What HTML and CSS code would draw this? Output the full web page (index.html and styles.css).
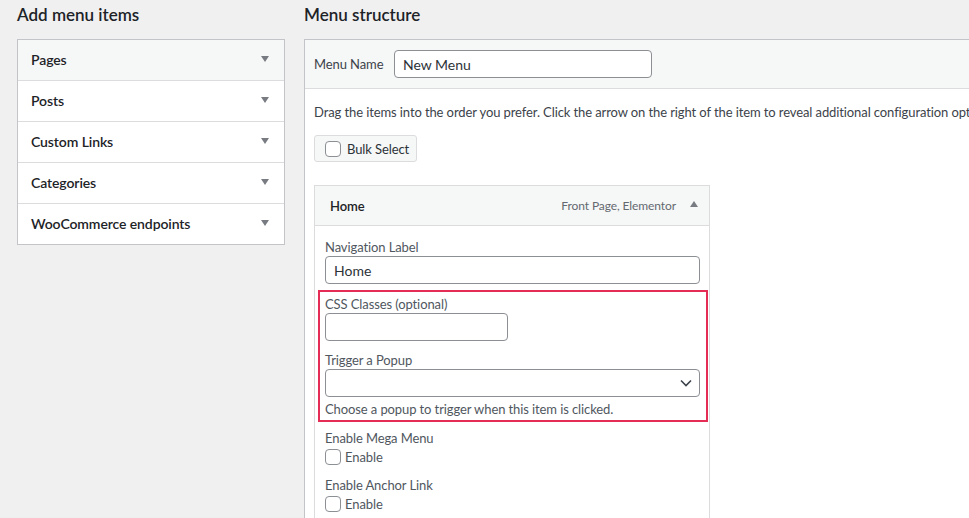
FILE: index.html
```html
<!DOCTYPE html>
<html lang="en">
<head>
  <meta charset="UTF-8" />
  <meta name="viewport" content="width=device-width, initial-scale=1.0" />
  <title>Menus</title>
  <link rel="stylesheet" href="styles.css">
</head>
<body>
  <div class="wrap">
    <!-- left column -->
    <div class="col-left">
      <h2>Add menu items</h2>
      <div class="accordion">
        <div class="acc-row first">Pages <span class="tri down"></span></div>
        <div class="acc-row">Posts <span class="tri down"></span></div>
        <div class="acc-row">Custom Links <span class="tri down"></span></div>
        <div class="acc-row">Categories <span class="tri down"></span></div>
        <div class="acc-row">WooCommerce endpoints <span class="tri down"></span></div>
      </div>
    </div>

    <!-- right column -->
    <div class="col-right">
      <h2>Menu structure</h2>
      <div class="menu-box">
        <div class="menu-head">
          <label class="name-label">Menu Name</label>
          <input class="text-input name-input" type="text" value="New Menu">
        </div>
        <div class="menu-body">
          <p class="intro">Drag the items into the order you prefer. Click the arrow on the right of the item to reveal additional configuration options.</p>
          <div class="bulk-btn"><span class="check"></span> Bulk Select</div>

          <div class="item">
            <div class="item-bar">
              <span class="item-title">Home</span>
              <span class="item-meta">Front Page, Elementor <span class="tri up"></span></span>
            </div>
            <div class="item-settings">
              <div class="field">
                <div class="field-label">Navigation Label</div>
                <input class="text-input wide" type="text" value="Home">
              </div>
              <div class="highlight">
                <div class="field">
                  <div class="field-label">CSS Classes (optional)</div>
                  <input class="text-input short" type="text" value="">
                </div>
                <div class="field gap">
                  <div class="field-label">Trigger a Popup</div>
                  <div class="select">
                    <svg width="12" height="8" viewBox="0 0 12 8"><path d="M1 1.5l5 5 5-5" fill="none" stroke="#3c434a" stroke-width="1.6"/></svg>
                  </div>
                  <div class="help">Choose a popup to trigger when this item is clicked.</div>
                </div>
              </div>
              <div class="field">
                <div class="field-label">Enable Mega Menu</div>
                <div class="check-line"><span class="check"></span> Enable</div>
              </div>
              <div class="field gap-lg">
                <div class="field-label">Enable Anchor Link</div>
                <div class="check-line"><span class="check"></span> Enable</div>
              </div>
            </div>
          </div>
        </div>
      </div>
    </div>
  </div>
</body>
</html>
```

FILE: styles.css
```css
html, body {
  margin: 0;
  height: 100%;
  overflow: hidden;
}
body {
  background-color: #f0f0f1;
  color: #1d2327;
  font-family: Lato, "Liberation Sans", sans-serif;
  font-size: 13px;
  letter-spacing: -0.1px;
}
.wrap {
  display: flex;
  gap: 19px;
  padding-left: 17px;
}
h2 {
  font-size: 17px;
  font-weight: 600;
  margin: 0;
  padding-top: 4px;
  line-height: 22px;
  height: 35px;
  letter-spacing: 0;
}
.col-left {
  width: 268px;
  flex: none;
}
.accordion {
  border: 1px solid #c3c4c7;
  background-color: #fff;
}
.acc-row {
  display: flex;
  justify-content: space-between;
  align-items: center;
  box-sizing: border-box;
  height: 41px;
  padding: 0 14px 2px 13px;
  font-size: 14px;
  font-weight: 600;
  border-top: 1px solid #dcdcde;
}
.acc-row.first {
  border-top: none;
  height: 40px;
  background-color: #f6f7f7;
}
.tri {
  display: inline-block;
  width: 0;
  height: 0;
  border-left: 4px solid transparent;
  border-right: 4px solid transparent;
}
.tri.down {
  border-top: 6px solid #787c82;
  margin-right: 1px;
}
.tri.up {
  border-bottom: 6px solid #787c82;
  margin-left: 14px;
  margin-bottom: 3px;
}
.col-right {
  width: 720px;
  flex: none;
}
.menu-box {
  border: 1px solid #c3c4c7;
  background-color: #fff;
  height: 600px;
}
.menu-head {
  display: flex;
  align-items: center;
  height: 48px;
  padding: 0 9px;
  background-color: #f6f7f7;
  border-bottom: 1px solid #dcdcde;
}
.name-label {
  width: 80px;
  color: #3c434a;
}
.text-input {
  box-sizing: border-box;
  height: 28px;
  border: 1px solid #8c8f94;
  border-radius: 4px;
  padding: 0 8px;
  font-family: inherit;
  font-size: 14px;
  color: #2c3338;
  background-color: #fff;
}
.name-input {
  width: 258px;
}
.menu-body {
  padding: 13px 9px 0;
}
.intro {
  margin: 0;
  line-height: 20px;
  color: #3c434a;
  white-space: nowrap;
}
.bulk-btn {
  display: inline-flex;
  align-items: center;
  gap: 6px;
  margin-top: 13px;
  height: 25px;
  padding: 0 7px 0 10px;
  border: 1px solid #dcdcde;
  border-radius: 3px;
  background-color: #f6f7f7;
  color: #2c3338;
}
.check {
  display: inline-block;
  box-sizing: border-box;
  width: 16px;
  height: 16px;
  border: 1px solid #8c8f94;
  border-radius: 4px;
  background-color: #fff;
}
.item {
  width: 396px;
  margin-top: 23px;
}
.item-bar {
  display: flex;
  justify-content: space-between;
  align-items: center;
  height: 39px;
  padding: 0 11px 0 15px;
  background-color: #f6f7f7;
  border: 1px solid #dcdcde;
}
.item-title {
  font-weight: 600;
}
.item-meta {
  color: #646970;
  font-size: 12px;
  display: flex;
  align-items: center;
}
.item-settings {
  border: 1px solid #dcdcde;
  border-top: none;
  padding: 12px 9px 40px 10px;
}
.field-label {
  line-height: 18px;
  color: #50575e;
}
.field.gap {
  margin-top: 10px;
}
.field.gap-lg {
  margin-top: 11px;
}
.wide {
  width: 100%;
}
.short {
  width: 183px;
}
.highlight {
  margin: 6px -8px 7px -7px;
  padding: 3px 6px 2px 5px;
  border: 2px solid #e42c55;
}
.select {
  box-sizing: border-box;
  height: 28px;
  border: 1px solid #8c8f94;
  border-radius: 4px;
  display: flex;
  align-items: center;
  justify-content: flex-end;
  padding-right: 7px;
}
.help {
  margin-top: 3px;
  line-height: 18px;
  color: #50575e;
}
.check-line {
  display: flex;
  align-items: center;
  gap: 4px;
  margin-top: 2px;
  color: #50575e;
}
```
